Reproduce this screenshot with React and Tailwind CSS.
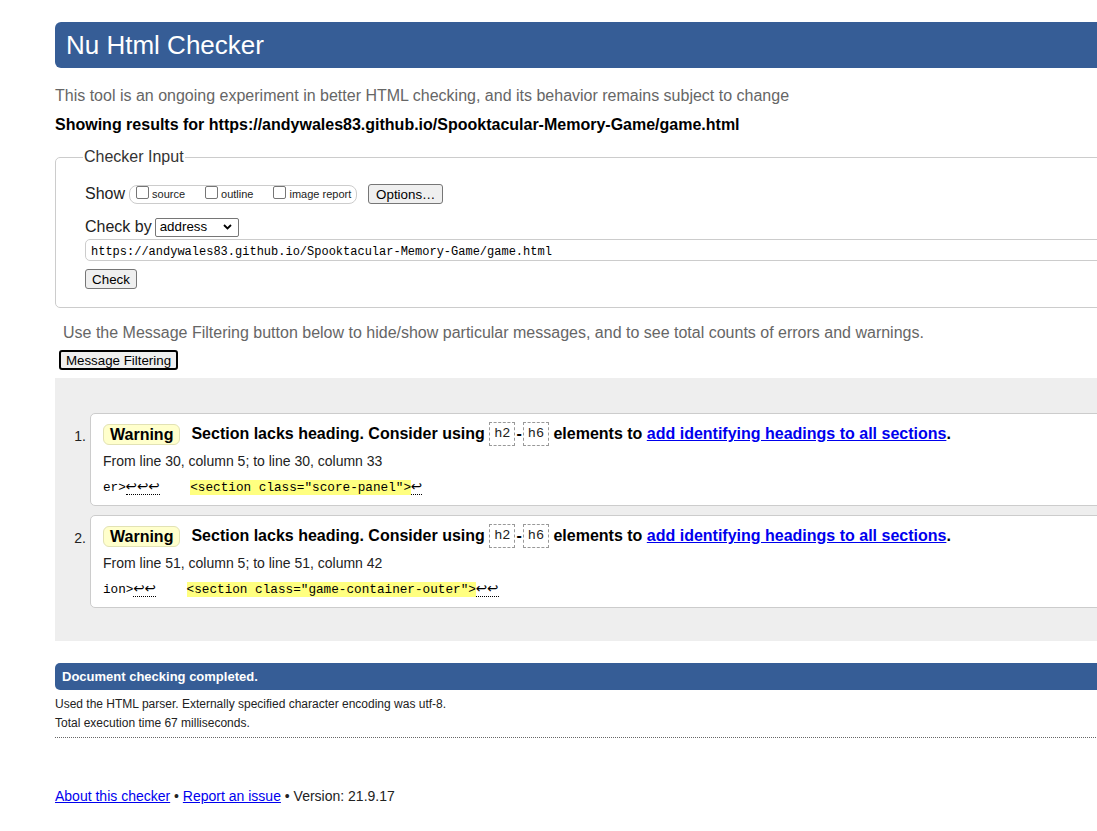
import React from "react";

const mono = "font-['Liberation_Mono','DejaVu_Sans_Mono',monospace]";

const Checkbox = () => (
  <span className="inline-block w-[13px] h-[13px] border border-[#767676] rounded-[2px] bg-white mr-[3px] -mt-[3px] shrink-0" />
);

const Dotted = ({ children }) => (
  <span className="border-b border-dotted border-black font-['DejaVu_Sans',sans-serif] text-[13.5px]">{children}</span>
);

const CodeBox = ({ children }) => (
  <span className={`${mono} inline-flex items-center h-[24px] px-[4px] border border-dashed border-[#999] text-[13.5px] font-normal text-[#222]`}>
    {children}
  </span>
);

const Message = ({ n, from, pre, arrows, snippet, post }) => (
  <li className="flex">
    <div className="w-[35px] shrink-0 text-right pr-[4px] pt-[14px] text-[14px] leading-[18px] text-[#222]">
      {n}.
    </div>
    <div className="flex-1 h-[93px] bg-white border border-[#ccc] rounded-l-[5px] pl-[12px] pt-[8px]">
      <div className="flex items-center h-[24px] text-[16px] font-bold text-black">
        <span className="h-[21px] leading-[19px] px-[6px] bg-[#ffffcc] border border-[#e2e2b4] rounded-[6px] mr-[11px]">
          Warning
        </span>
        <span className="whitespace-pre">Section lacks heading. Consider using </span>
        <CodeBox>h2</CodeBox>
        <span className="mx-[1px]">-</span>
        <CodeBox>h6</CodeBox>
        <span className="whitespace-pre"> elements to </span>
        <a href="#" className="text-[#0000ee] underline">
          add identifying headings to all sections
        </a>
        <span>.</span>
      </div>
      <div className="mt-[6px] text-[14px] leading-[18px] text-[#222]">{from}</div>
      <div className={`${mono} mt-[6px] text-[12.7px] leading-[20px] whitespace-pre text-black`}>
        {pre}
        <Dotted>{arrows}</Dotted>
        {"    "}
        <span className="bg-[#ffff80]">{snippet}</span>
        <Dotted>{post}</Dotted>
      </div>
    </div>
  </li>
);

export default function App() {
  return (
    <div className="w-[1097px] h-[831px] overflow-hidden bg-white font-['Liberation_Sans',Arial,sans-serif] text-[#222]">
      <div className="pl-[55px] pt-[22px] w-[1200px]">
        <h1 className="h-[46px] leading-[46px] pl-[11px] bg-[#365d96] rounded-l-[6px] text-white text-[26px]">
          Nu Html Checker
        </h1>

        <p className="mt-[18px] text-[16px] leading-[20px] text-[#666]">
          This tool is an ongoing experiment in better HTML checking, and its behavior remains subject to change
        </p>
        <p className="mt-[9px] text-[16px] leading-[20px] font-bold text-black">
          Showing results for https://andywales83.github.io/Spooktacular-Memory-Game/game.html
        </p>

        <fieldset className="mt-[12px] border border-[#ccc] rounded-l-[5px] p-0">
          <legend className="ml-[27px] px-px text-[16px] leading-[20px] text-[#333]">Checker Input</legend>
          <div className="pl-[29px] pt-[17px] pb-[18px]">
            <div className="flex items-center h-[20px]">
              <span className="text-[16px] text-[#222]">Show</span>
              <div className="ml-[4px] flex items-center h-[19px] pl-[6px] pr-[5px] border border-[#ccc] rounded-[8px] text-[11px] text-[#222]">
                <Checkbox />
                <span className="mr-[20px]">source</span>
                <Checkbox />
                <span className="mr-[20px]">outline</span>
                <Checkbox />
                <span>image report</span>
              </div>
              <button className="ml-[11px] h-[20px] w-[75px] border border-[#767676] rounded-[3px] bg-[#efefef] text-[13.33px] text-black">
                Options…
              </button>
            </div>

            <div className="mt-[13px] flex items-center h-[20px]">
              <span className="text-[16px] text-[#222]">Check by</span>
              <div className="ml-[3px] flex items-center justify-between w-[84px] h-[19px] pl-[4px] pr-[6px] border border-[#767676] rounded-[2px] bg-white text-[13.33px] text-black">
                <span>address</span>
                <svg width="9" height="6" viewBox="0 0 9 6" fill="none" stroke="black" strokeWidth="1.8">
                  <path d="M1 1l3.5 3.5L8 1" />
                </svg>
              </div>
            </div>

            <div className={`${mono} mt-[2px] flex items-center h-[22px] pl-[5px] pt-[3px] border border-[#ccc] rounded-l-[5px] text-[12px] text-black`}>
              https://andywales83.github.io/Spooktacular-Memory-Game/game.html
            </div>

            <button className="block mt-[8px] h-[20px] w-[52px] border border-[#767676] rounded-[3px] bg-[#efefef] text-[13.33px] text-black">
              Check
            </button>
          </div>
        </fieldset>

        <p className="mt-[15px] pl-[8px] text-[16px] leading-[20px] text-[#666]">
          Use the Message Filtering button below to hide/show particular messages, and to see total counts of errors and warnings.
        </p>
        <button className="block mt-[7px] ml-[4px] h-[20px] w-[119px] border-2 border-black rounded-[3px] bg-[#efefef] text-[13.33px] leading-[15px] text-black">
          Message Filtering
        </button>

        <ol className="mt-[8px] bg-[#eeeeee] pt-[35px] pb-[33px] flex flex-col gap-[9px]">
          <Message
            n={1}
            from="From line 30, column 5; to line 30, column 33"
            pre="er>"
            arrows="↩↩↩"
            snippet={'<section class="score-panel">'}
            post="↩"
          />
          <Message
            n={2}
            from="From line 51, column 5; to line 51, column 42"
            pre="ion>"
            arrows="↩↩"
            snippet={'<section class="game-container-outer">'}
            post="↩↩"
          />
        </ol>

        <h2 className="mt-[22px] h-[27px] leading-[27px] pl-[7px] bg-[#365d96] rounded-l-[5px] text-white text-[13px] font-bold">
          Document checking completed.
        </h2>
        <p className="mt-[5px] text-[12px] leading-[19px] text-[#222]">
          Used the HTML parser. Externally specified character encoding was utf-8.
        </p>
        <p className="text-[12px] leading-[19px] text-[#222]">Total execution time 67 milliseconds.</p>
        <div className="mt-[4px] border-b border-dotted border-[#666]" />

        <p className="mt-[48px] text-[14px] leading-[20px] text-[#222]">
          <a href="#" className="text-[#0000ee] underline">About this checker</a>
          {" • "}
          <a href="#" className="text-[#0000ee] underline">Report an issue</a>
          {" • Version: 21.9.17"}
        </p>
      </div>
    </div>
  );
}
